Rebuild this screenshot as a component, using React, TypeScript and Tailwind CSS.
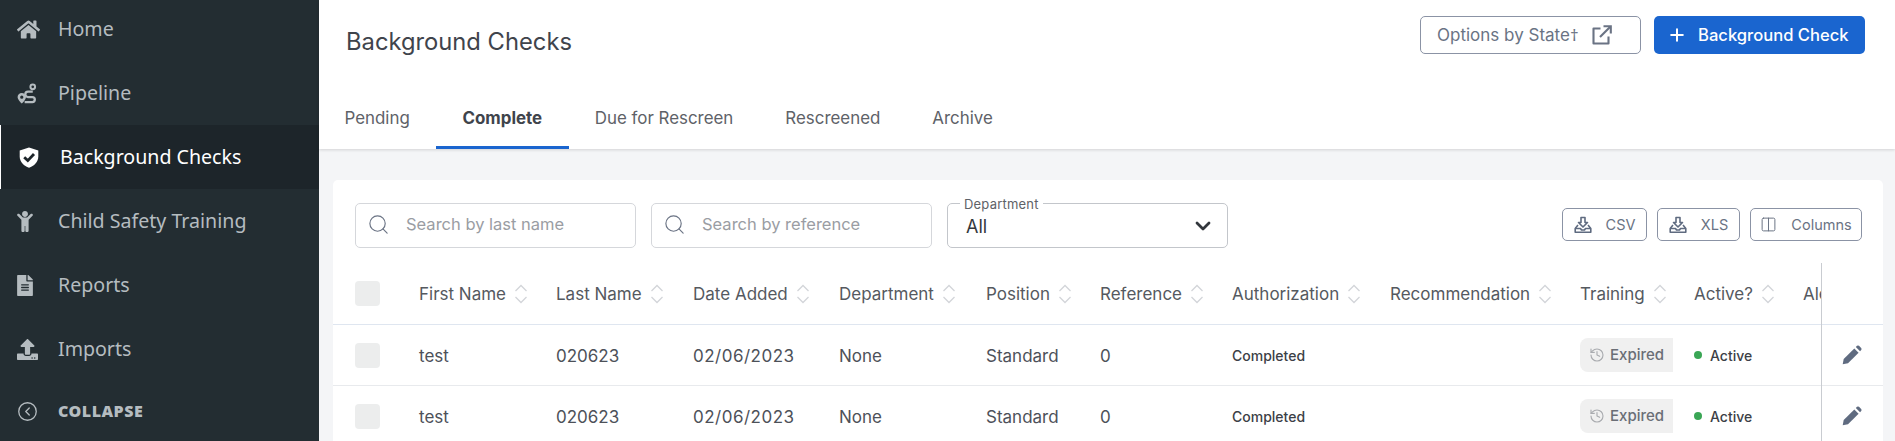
import { ChevronDown, CircleChevronLeft, Columns2, History, Plus, Search } from "lucide-react";
import { FaChild, FaFileAlt, FaHome, FaUpload } from "react-icons/fa";
import type { ReactNode } from "react";

const ShieldIcon = () => (
  <svg viewBox="0 0 20 21" className="h-[21px] w-[20px]">
    <path fill="#ffffff" d="M10 0.5 19.3 3.6V9.5C19.3 15 15 19 10 20.8 5 19 0.7 15 0.7 9.5V3.6Z" />
    <path fill="none" stroke="#1d252a" strokeWidth="2.8" d="M5.2 10.2 8.8 13.6 15 7" />
  </svg>
);

const RouteIcon = () => (
  <svg viewBox="0 0 22 21" className="h-[21px] w-[21px]">
    <path
      fill="currentColor"
      fillRule="evenodd"
      d="M5 10C2.5 10 .6 11.9.6 14.3c0 2 2.6 5 4.4 6.7 1.8-1.7 4.4-4.7 4.4-6.7C9.4 11.9 7.5 10 5 10Zm0 2.7a1.7 1.7 0 1 1 0 3.4 1.7 1.7 0 0 1 0-3.4Z"
    />
    <path
      fill="currentColor"
      fillRule="evenodd"
      d="M16.5 0a3.5 3.5 0 1 1 0 7 3.5 3.5 0 0 1 0-7Zm0 2.1a1.4 1.4 0 1 0 0 2.8 1.4 1.4 0 0 0 0-2.8Z"
    />
    <path fill="none" stroke="currentColor" strokeWidth="2.4" d="M16.5 8.6H11.5a2.8 2.8 0 0 0 0 5.6H16a2.5 2.5 0 0 1 0 5.3H8" />
  </svg>
);

const ExternalIcon = () => (
  <svg viewBox="0 0 20 20" className="h-[20px] w-[20px]" fill="none" stroke="currentColor" strokeWidth="2.1">
    <path d="M8.5 3.5H1.5V18.5H16.5V11.5" strokeLinejoin="round" />
    <path d="M8 12 18 2" />
    <path d="M11.5 1.2H18.8V8.5" />
  </svg>
);

const PencilIcon = () => (
  <svg viewBox="0 0 20 20" className="h-[20px] w-[20px]" fill="#5f6b80">
    <path d="M0.7 19.3 1.7 14 12.3 3.4 16.6 7.7 6 18.3Z" />
    <path d="M13.8 1.9 15 .8Q16 0 17 .8L19.2 3Q20 4 19.2 5L18.1 6.2Z" />
  </svg>
);

const navItems = [
  { label: "Home", icon: <FaHome className="h-[23px] w-[23px]" />, active: false },
  { label: "Pipeline", icon: <RouteIcon />, active: false },
  { label: "Background Checks", icon: <ShieldIcon />, active: true },
  { label: "Child Safety Training", icon: <FaChild className="h-[21px] w-[16px]" />, active: false },
  { label: "Reports", icon: <FaFileAlt className="h-[21px] w-[16px]" />, active: false },
  { label: "Imports", icon: <FaUpload className="h-[21px] w-[21px]" />, active: false },
];

const tabs = ["Pending", "Complete", "Due for Rescreen", "Rescreened", "Archive"];

const columns = [
  { label: "First Name", width: "w-[137px]" },
  { label: "Last Name", width: "w-[137px]" },
  { label: "Date Added", width: "w-[146px]" },
  { label: "Department", width: "w-[147px]" },
  { label: "Position", width: "w-[114px]" },
  { label: "Reference", width: "w-[132px]" },
  { label: "Authorization", width: "w-[158px]" },
  { label: "Recommendation", width: "w-[190px]" },
  { label: "Training", width: "w-[114px]" },
  { label: "Active?", width: "w-[109px]" },
];

const SortIcon = () => (
  <svg viewBox="0 0 14 20" className="-mt-[2px] ml-[8px] h-[20px] w-[14px] shrink-0" fill="none" stroke="#d3d5d9" strokeWidth="1.3">
    <path d="M1.5 7 7 1.5 12.5 7" />
    <path d="M1.5 13 7 18.5 12.5 13" />
  </svg>
);

const TrayIcon = () => (
  <svg viewBox="0 0 18 18" className="h-[18px] w-[18px]" fill="none" stroke="#5f6b80" strokeWidth="1.6" strokeLinejoin="round">
    <path d="M7 1.5h4v5h2.5L9 11 4.5 6.5H7z" />
    <path d="M4 9 1.2 12.5v3.8h15.6v-3.8L14 9" />
    <path d="M1.2 12.5h5.3l1 1.5h3l1-1.5h5.3" />
  </svg>
);

const ToolButton = ({ icon, label, width }: { icon: ReactNode; label: string; width: string }) => (
  <button className={`flex h-[33px] items-center justify-center gap-[14px] rounded-[5px] border border-[#8b93a5] text-[14.5px] text-[#6a7384] ${width}`}>
    {icon}
    {label}
  </button>
);

const SearchBox = ({ placeholder }: { placeholder: string }) => (
  <div className="flex h-[45px] w-[281px] items-center rounded-[5px] border border-[#d5d7db] pb-[3px] pl-[11px]">
    <Search className="h-[23px] w-[23px] text-[#6a7384]" strokeWidth={1.2} />
    <span className="ml-[16px] text-[16.5px] text-[#9a9da3]">{placeholder}</span>
  </div>
);

const Checkbox = () => (
  <div className="w-[86px] shrink-0 pl-[22px]">
    <div className="h-[25px] w-[25px] rounded-[4px] bg-[#eceded]" />
  </div>
);

const Row = () => (
  <div className="flex h-[61px] items-center border-b border-[#e8eaed] text-[17px] text-[#4d5159]">
    <Checkbox />
    <div className="w-[137px] shrink-0 pt-[3px]">test</div>
    <div className="w-[137px] shrink-0 pt-[3px]">020623</div>
    <div className="w-[146px] shrink-0 pt-[3px] tracking-[0.5px]">02/06/2023</div>
    <div className="w-[147px] shrink-0 pt-[3px]">None</div>
    <div className="w-[114px] shrink-0 pt-[3px]">Standard</div>
    <div className="w-[132px] shrink-0 pt-[3px]">0</div>
    <div className="w-[348px] shrink-0 text-[14px] font-medium text-[#3c4046]">Completed</div>
    <div className="w-[114px] shrink-0">
      <div className="flex h-[34px] w-[93px] items-center gap-[5px] overflow-hidden rounded-l-[8px] bg-[#f0f0f0] pl-[9px] text-[15px] font-medium text-[#6a6e76]">
        <History className="h-[16px] w-[16px] shrink-0 text-[#a9abaf]" strokeWidth={1.7} />
        Expired
      </div>
    </div>
    <div className="flex w-[109px] shrink-0 items-center gap-[8px] text-[14px] font-medium text-[#3c4046]">
      <span className="h-[8px] w-[8px] rounded-full bg-[#3aa655]" />
      Active
    </div>
  </div>
);

const EditCell = () => (
  <div className="flex h-[61px] items-center justify-center border-b border-[#e8eaed] pr-[2px]">
    <PencilIcon />
  </div>
);

export default function App() {
  return (
    <div className="flex h-[441px] w-[1895px] overflow-hidden bg-[#f4f5f7] font-['Inter',sans-serif]">
      <aside className="flex w-[319px] shrink-0 flex-col bg-[#232d32] font-['Noto_Sans',sans-serif]">
        <nav className="-mt-[3px]">
          {navItems.map((item) => (
            <div
              key={item.label}
              className={`flex h-[64px] items-center text-[19.6px] ${
                item.active ? "border-l border-white bg-[#1d252a] pl-[18px] text-white" : "pl-[17px] text-[#b5bcc0]"
              }`}
            >
              <span className="flex w-[41px] shrink-0 justify-start">{item.icon}</span>
              {item.label}
            </div>
          ))}
        </nav>
        <div className="flex h-[62px] items-center pl-[17px] text-[#b5bcc0]">
          <CircleChevronLeft className="h-[21px] w-[21px]" strokeWidth={1.5} />
          <span className="ml-[20px] text-[16px] font-black tracking-[0.5px]">COLLAPSE</span>
        </div>
      </aside>

      <main className="flex min-w-0 flex-1 flex-col">
        <header className="relative z-10 h-[149px] bg-white shadow-[0_1px_3px_rgba(0,0,0,0.14)]">
          <div className="flex h-[97px] items-start justify-between pl-[27px] pr-[30px] pt-[16px]">
            <h1 className="mt-[8px] text-[23.75px] font-normal text-[#3f444c]">Background Checks</h1>
            <div className="flex gap-[13px]">
              <button className="flex h-[38px] w-[221px] items-center gap-[13px] rounded-[5px] border border-[#8b93a5] pl-[16px] text-[17px] text-[#6a7384]">
                <span>
                  Options by State<span className="font-['Noto_Sans',sans-serif]">†</span>
                </span>
                <ExternalIcon />
              </button>
              <button className="flex h-[38px] w-[211px] items-center gap-[11px] rounded-[5px] bg-[#1a65cf] pl-[13px] text-[16.6px] font-medium text-white">
                <Plus className="h-[20px] w-[20px]" strokeWidth={2.4} />
                Background Check
              </button>
            </div>
          </div>
          <div className="-ml-[0.5px] flex h-[52px] text-[16.9px] text-[#5e6268]">
            {tabs.map((tab) =>
              tab === "Complete" ? (
                <div key={tab} className="flex w-[133px] items-center justify-center border-b-[3px] border-[#1a65cf] pb-[5px] font-bold text-[#3f444c]">
                  {tab}
                </div>
              ) : (
                <div key={tab} className="flex items-center px-[26px] pb-[8px]">
                  {tab}
                </div>
              ),
            )}
          </div>
        </header>

        <section className="ml-[14px] mt-[31px] flex min-h-0 w-[1550px] flex-1 flex-col rounded-t-[5px] bg-white">
          <div className="flex h-[83px] shrink-0 items-start justify-between pl-[22px] pr-[21px] pt-[23px]">
            <div className="flex gap-[15px]">
              <SearchBox placeholder="Search by last name" />
              <SearchBox placeholder="Search by reference" />
              <div className="relative flex h-[45px] w-[281px] items-center justify-between rounded-[5px] border border-[#c3c6cb] pl-[18px] pr-[12px]">
                <span className="absolute -top-[9px] left-[12px] bg-white px-[4px] text-[13px] tracking-[0.2px] text-[#5e6268]">Department</span>
                <span className="mt-[2px] text-[18px] text-[#33373d]">All</span>
                <ChevronDown className="h-[24px] w-[24px] text-[#33373d]" strokeWidth={2.8} />
              </div>
            </div>
            <div className="mt-[5px] flex gap-[10px]">
              <ToolButton icon={<TrayIcon />} label="CSV" width="w-[85px]" />
              <ToolButton icon={<TrayIcon />} label="XLS" width="w-[83px]" />
              <ToolButton icon={<Columns2 className="h-[17px] w-[17px]" strokeWidth={1.4} />} label="Columns" width="w-[112px]" />
            </div>
          </div>

          <div className="flex min-h-0 flex-1">
            <div className="min-w-0 flex-1 overflow-hidden">
              <div className="w-[1600px]">
                <div className="flex h-[62px] items-center border-b border-[#dfe6f0] pt-[2px] text-[17px] text-[#55595f]">
                  <div className="-mt-[2px]">
                    <Checkbox />
                  </div>
                  {columns.map((col) => (
                    <div key={col.label} className={`flex shrink-0 items-center ${col.width}`}>
                      {col.label}
                      <SortIcon />
                    </div>
                  ))}
                  <div>Alerts</div>
                </div>
                <Row />
                <Row />
              </div>
            </div>
            <div className="w-[62px] shrink-0 border-l border-[#c9ccd1]">
              <div className="h-[62px] border-b border-[#dfe6f0]" />
              <EditCell />
              <EditCell />
            </div>
          </div>
        </section>
      </main>
    </div>
  );
}
